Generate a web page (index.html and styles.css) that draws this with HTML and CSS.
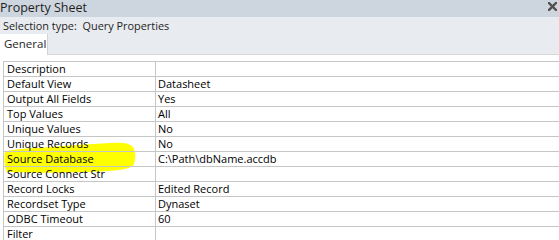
FILE: index.html
```html
<!DOCTYPE html>
<html>
<head>
<meta charset="utf-8">
<link rel="stylesheet" href="styles.css">
</head>
<body>
<div class="sheet">
  <div class="titlebar">
    <span class="title">Property Sheet</span>
    <svg class="close" width="9" height="9" viewBox="0 0 9 9"><path d="M1 1L8 8M8 1L1 8" stroke="#505050" stroke-width="2.4" stroke-linecap="square"/></svg>
  </div>
  <div class="header">
    <div class="seltype">Selection type:&nbsp; Query Properties</div>
    <div class="tabs">
      <div class="tab">General</div>
      <div class="tabline"></div>
    </div>
  </div>
  <div class="body">
    <svg class="marker" width="140" height="36" viewBox="0 0 140 36"><path d="M5 12 C12 9 30 8 40 8 C60 6 90 4 110 3 C122 2 130 3 133 7 C136 13 136 20 133 26 C128 30 110 31 90 32 C60 33 30 33 7 32 C4 26 4 18 5 12 Z" fill="#ffff00"/></svg>
    <div class="grid">
      <div class="row"><div class="name">Description</div><div class="val"></div></div>
      <div class="row"><div class="name">Default View</div><div class="val">Datasheet</div></div>
      <div class="row"><div class="name">Output All Fields</div><div class="val">Yes</div></div>
      <div class="row"><div class="name">Top Values</div><div class="val">All</div></div>
      <div class="row"><div class="name">Unique Values</div><div class="val">No</div></div>
      <div class="row"><div class="name">Unique Records</div><div class="val">No</div></div>
      <div class="row"><div class="name">Source Database</div><div class="val">C:\Path\dbName.accdb</div></div>
      <div class="row"><div class="name">Source Connect Str</div><div class="val"></div></div>
      <div class="row"><div class="name">Record Locks</div><div class="val">Edited Record</div></div>
      <div class="row"><div class="name">Recordset Type</div><div class="val">Dynaset</div></div>
      <div class="row"><div class="name">ODBC Timeout</div><div class="val">60</div></div>
      <div class="row"><div class="name">Filter</div><div class="val"></div></div>
    </div>
  </div>
</div>
</body>
</html>
```
FILE: styles.css
```css
* { box-sizing: border-box; }
html, body { margin: 0; padding: 0; background: #ffffff; }
body {
  font-family: "Open Sans", "Noto Sans", sans-serif;
  font-size: 11px;
  color: #000;
  width: 559px;
  height: 240px;
  overflow: hidden;
}
.titlebar {
  height: 17px;
  background: #cdd5de;
  display: flex;
  align-items: center;
  justify-content: space-between;
  padding: 0 2px 0 0;
}
.title {
  font-size: 12.5px;
  line-height: 17px;
  color: #1e1e1e;
  margin-top: -2px;
}
.close { display: block; margin-top: -4px; }
.header {
  background: #e8ebef;
  height: 38px;
  display: flex;
  flex-direction: column;
  justify-content: space-between;
}
.seltype {
  padding: 0 0 0 3px;
  line-height: 16px;
  margin-top: 1px;
  color: #1e1e1e;
  font-size: 10.9px;
}
.tabs {
  display: flex;
  height: 21px;
  align-items: stretch;
}
.tab {
  width: 48px;
  background: #ffffff;
  border-right: 1px solid #cfd2d6;
  padding-left: 4px;
  line-height: 19px;
  color: #1e1e1e;
  font-size: 11.5px;
}
.tabline {
  flex: 1;
  border-bottom: 1px solid #d4d6d9;
}
.body {
  position: relative;
  padding: 6px 0 0 3px;
}
.marker {
  position: absolute;
  left: 0;
  top: 85px;
  z-index: 0;
}
.grid {
  position: relative;
  z-index: 1;
  border-top: 1px solid #c6c6c6;
  border-left: 1px solid #c6c6c6;
}
.row {
  display: flex;
  height: 15px;
  border-bottom: 1px solid #c6c6c6;
}
.name {
  width: 152px;
  border-right: 1px solid #c6c6c6;
  padding-left: 3px;
  line-height: 14px;
  white-space: nowrap;
}
.val {
  flex: 1;
  padding-left: 2px;
  line-height: 14px;
  white-space: nowrap;
}
```
